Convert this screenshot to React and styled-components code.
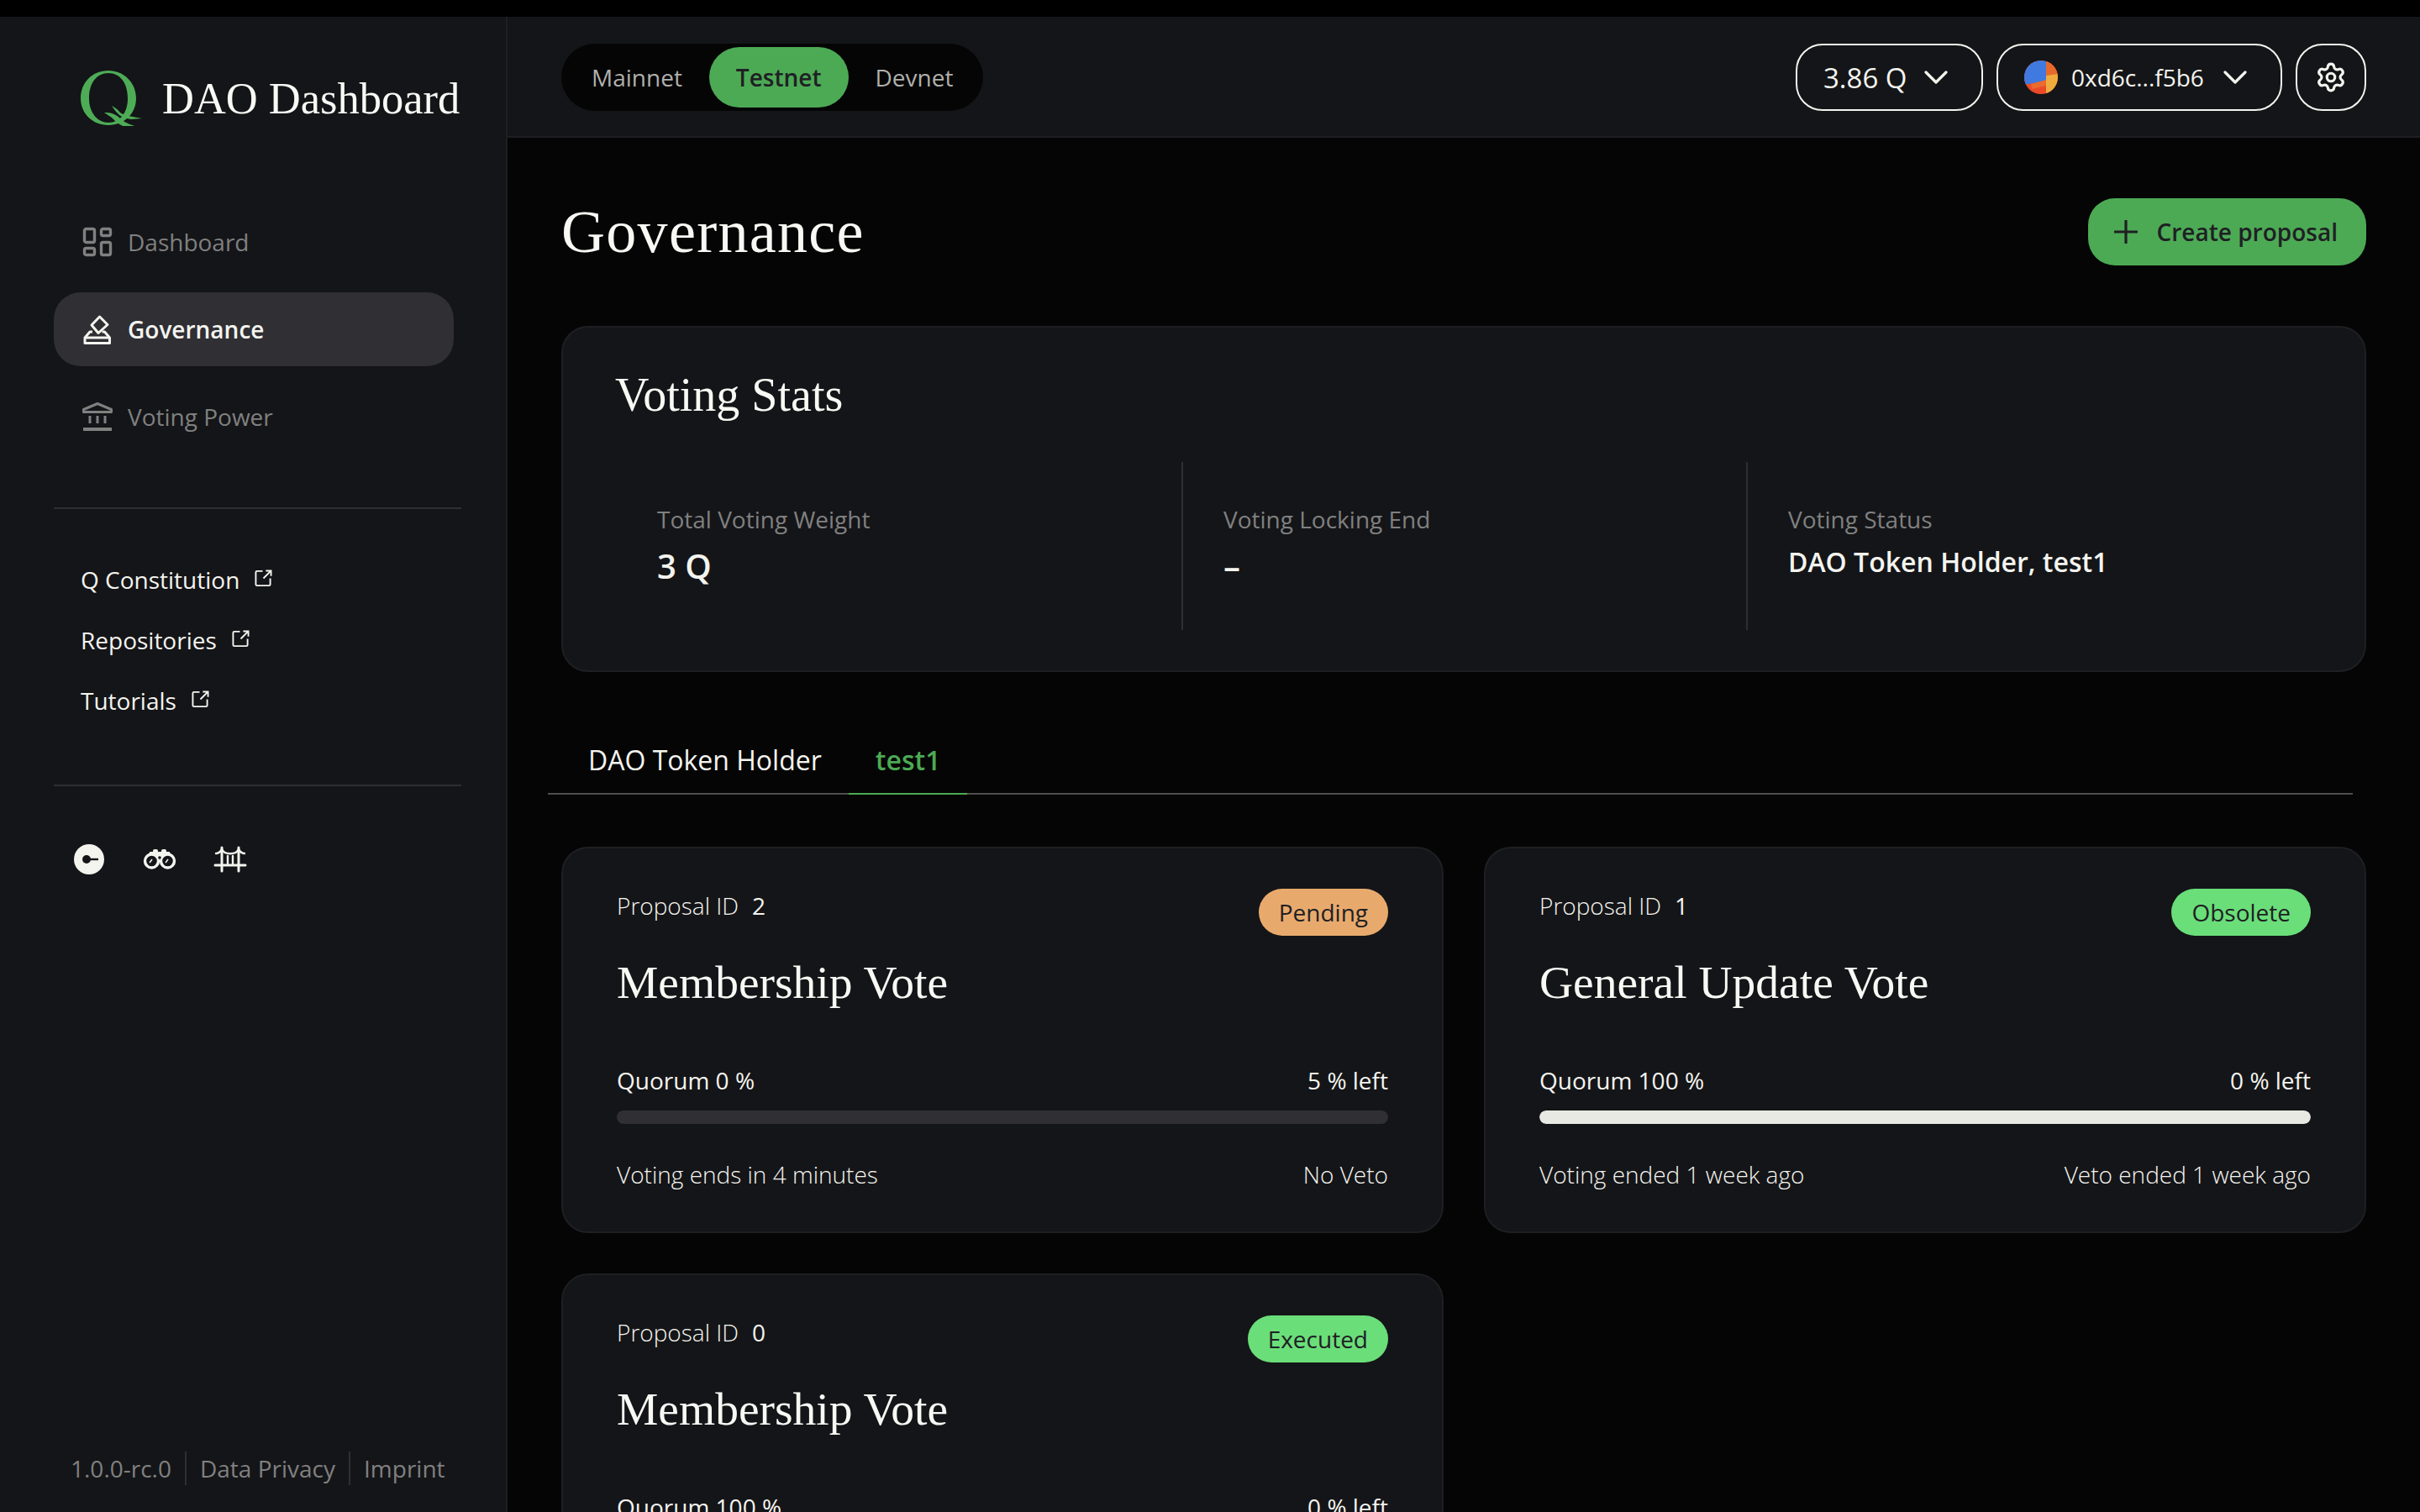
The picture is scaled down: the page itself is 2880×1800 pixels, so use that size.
import React from "react";
import styled, { createGlobalStyle } from "styled-components";
import { Settings } from "lucide-react";

const Global = createGlobalStyle`
  html, body { margin: 0; padding: 0; background: #000; }
  * { box-sizing: border-box; }
  body { font-family: "Open Sans", "Noto Sans", sans-serif; color: #f4f4ef; }
`;
const SERIF = `"Liberation Serif", "Times New Roman", serif`;

const Page = styled.div`
  display: flex; width: 2880px; height: 1800px; padding-top: 20px; overflow: hidden; background: #000;
`;
const Sidebar = styled.aside`
  flex: 0 0 604px; width: 604px; min-width: 0; display: flex; flex-direction: column; background: #141518;
  border-right: 2px solid #1e1f22; padding: 0 53px 32px 64px;
`;
const Brand = styled.div`
  display: flex; align-items: center; height: 66px; margin-top: 64px; padding-left: 32px; gap: 23px;
`;
const BrandName = styled.span`
  font: 400 52.5px/62px ${SERIF}; color: #f8f8f4; white-space: nowrap;
`;
const Nav = styled.nav`
  display: flex; flex-direction: column; gap: 16px; margin-top: 94px; width: 476px;
`;
const NavItem = styled.a`
  display: flex; align-items: center; gap: 16px; height: 88px; padding-left: 32px; border-radius: 32px;
  font-size: 28px; font-weight: ${p => (p.$active ? 600 : 400)};
  color: ${p => (p.$active ? "#f4f4ef" : "#808080")};
  background: ${p => (p.$active ? "#2f2f34" : "transparent")};
  svg { flex: 0 0 40px; width: 40px; height: 40px; }
`;
const Divider = styled.hr`
  border: 0; height: 2px; margin: ${p => p.$m}; background: #2f2f33; width: 100%;
`;
const Links = styled.div`display: flex; flex-direction: column; padding-left: 32px;`;
const LinkRow = styled.a`
  display: flex; align-items: center; gap: 18px; height: 72px; font-size: 28px; color: #f4f4ef; margin-top: -1px; margin-bottom: 1px;
  svg { width: 21px; height: 21px; margin-top: -3px; }
`;
const Tools = styled.div`
  display: flex; align-items: center; gap: 44px; height: 40px; padding-left: 22px;
  svg { width: 40px; height: 40px; }
`;
const Foot = styled.footer`
  display: flex; align-items: center; margin-top: auto; height: 40px; padding-left: 20px;
  font-size: 28px; color: #808080;
`;
const FootItem = styled.span`
  padding: 0 16px; height: 40px; line-height: 40px; white-space: nowrap;
  border-left: ${p => (p.$sep ? "2px solid #2f2f33" : "0")};
  &:first-child { padding-left: 0; }
`;
const Main = styled.main`flex: 1; min-width: 0; display: flex; flex-direction: column; background: #050505;`;
const Header = styled.header`
  display: flex; justify-content: space-between; align-items: center; height: 144px;
  padding: 32px 64px 30px; background: #141518; border-bottom: 2px solid #1e1f22;
`;
const Switch = styled.div`
  display: flex; height: 80px; padding: 4px; border-radius: 40px; background: #050505;
`;
const SwitchTab = styled.div`
  display: flex; align-items: center; height: 72px; padding: 0 32px; border-radius: 36px; font-size: 28px;
  font-weight: ${p => (p.$active ? 600 : 400)};
  color: ${p => (p.$active ? "#1f2024" : "#b0b0ac")};
  background: ${p => (p.$active ? "#4caa54" : "transparent")};
`;
const HeadActions = styled.div`display: flex; gap: 16px;`;
const OutlineButton = styled.button`
  display: flex; align-items: center; justify-content: ${p => (p.$center ? "center" : "flex-start")};
  height: 80px; width: ${p => p.$w}px; gap: ${p => p.$gap || 16}px; padding: 0 0 0 ${p => (p.$center ? 0 : 31)}px;
  border: 2px solid #f4f4ef; border-radius: 32px; background: #141518;
  color: #f4f4ef; font-family: inherit; font-size: ${p => p.$fs || 28}px; font-weight: 500;
`;
const Chevron = styled.svg`width: 28px; height: 16px; flex: none; margin-left: 7px;`;
const Content = styled.div`padding: 0 64px;`;
const TitleRow = styled.div`
  display: flex; justify-content: space-between; align-items: center; margin-top: 72px; height: 80px;
`;
const PageTitle = styled.h1`
  margin: 0; font: 400 72px/80px ${SERIF}; letter-spacing: 1.3px; color: #f8f8f4;
`;
const PrimaryButton = styled.button`
  display: flex; align-items: center; gap: 23px; height: 80px; padding: 0 34px 0 31px; border: 0; border-radius: 32px;
  background: #4caa54; color: #1f2024; font-family: inherit; font-size: 28px; font-weight: 600;
  svg { width: 28px; height: 28px; }
`;
const Panel = styled.section`
  background: #141518; border: 2px solid #1e1f22; border-radius: 32px;
`;
const StatsPanel = styled(Panel)`
  margin-top: 72px; height: 412px; padding: 44px 64px 48px;
`;
const StatsTitle = styled.h2`
  margin: 0 0 0 -2px; font: 400 56px/72px ${SERIF}; color: #f8f8f4;
`;
const StatsGrid = styled.div`
  display: grid; grid-template-columns: 674px 672px 1fr; height: 200px; margin-top: 44px;
`;
const Stat = styled.div`
  padding: 48px 48px 0; border-right: ${p => (p.$last ? "0" : "2px solid #2f2f33")};
`;
const StatLabel = styled.div`font-size: 28px; line-height: 40px; color: #808080;`;
const StatValue = styled.div`
  font-size: ${p => (p.$small ? 32 : 40)}px; line-height: ${p => (p.$small ? 62 : 72)}px; font-weight: 600; color: #f4f4ef;
`;
const TabBar = styled.div`
  display: flex; height: 82px; margin: 64px 16px 0 -16px; padding-left: 16px; border-bottom: 2px solid #4f4f4f;
`;
const Tab = styled.div`
  display: flex; align-items: center; height: 82px; padding: 0 32px; font-size: 32px;
  color: ${p => (p.$active ? "#4caa54" : "#f4f4ef")};
  font-weight: ${p => (p.$active ? 600 : 400)};
  border-bottom: 2px solid ${p => (p.$active ? "#4caa54" : "transparent")};
`;
const CardGrid = styled.div`
  display: grid; grid-template-columns: 1fr 1fr; gap: 48px; margin-top: 62px;
`;
const Card = styled(Panel)`padding: 48px 64px 47px;`;
const CardTop = styled.div`display: flex; justify-content: space-between; align-items: flex-start; height: 56px;`;
const ProposalId = styled.div`
  display: flex; gap: 16px; font-size: 28px; line-height: 40px; font-weight: 300; color: #f4f4ef;
  b { font-weight: 400; }
`;
const Badge = styled.span`
  display: flex; align-items: center; height: 56px; padding: 0 24px; border-radius: 28px; font-size: 28px; color: #1f2024;
  background: ${p => p.$color};
`;
const CardTitle = styled.h3`
  margin: 20px 0 0; font: 400 55.5px/72px ${SERIF}; color: #f8f8f4;
`;
const SplitRow = styled.div`
  display: flex; justify-content: space-between; height: 40px; line-height: 38px; font-size: 28px;
  font-weight: ${p => (p.$light ? 300 : 400)}; margin-top: ${p => p.$mt}px; color: #f4f4ef;
`;
const Track = styled.div`height: 16px; margin-top: 15px; border-radius: 8px; background: #2f2f34; overflow: hidden;`;
const Fill = styled.div`height: 100%; border-radius: 8px; background: #e9e9e3;`;

const DashboardIcon = () => (
  <svg viewBox="0 0 40 40" fill="none" stroke="currentColor" strokeWidth="3.4">
    <rect x="4.5" y="4.5" width="12" height="16" rx="2" />
    <rect x="24.5" y="4.5" width="11" height="8" rx="2" />
    <rect x="4.5" y="27.5" width="12" height="8" rx="2" />
    <rect x="24.5" y="20.5" width="11" height="15" rx="2" />
  </svg>
);
const GovernanceIcon = () => (
  <svg viewBox="0 0 40 40" fill="none" stroke="currentColor" strokeWidth="3" strokeLinejoin="round">
    <path d="M22.6 5L32 14.5L21 24.5L13 15z" />
    <path d="M14 23h-3l-6 7v6.5h29.500V30l-6-7h-3" />
    <path d="M5 30h29.500" />
  </svg>
);
const BankIcon = () => (
  <svg viewBox="0 0 40 40" fill="none" stroke="currentColor" strokeWidth="3" strokeLinejoin="round">
    <path d="M3.500 11.500L20 4.500l16.500 7v3h-33z" />
    <path d="M11 19v9M20 19v9M29 19v9" />
    <path strokeWidth="4" d="M3 35h34" />
  </svg>
);
const ExternalIcon = () => (
  <svg viewBox="0 0 22 22" fill="none" stroke="currentColor" strokeWidth="2">
    <path d="M10 2H3a1.500 1.500 0 0 0-1.500 1.500v15A1.500 1.500 0 0 0 3 20h15a1.500 1.500 0 0 0 1.500-1.500V11" />
    <path d="M11 11l9-9M14 1.500h6.500V8" />
  </svg>
);
const QLogo = () => (
  <svg width="74" height="66" viewBox="0 0 74 66" fill="#4eac56">
    <path fillRule="evenodd" d="M33 0C51 0 66 14 66 33C66 51 52 65 33 65C14 65 0 51 0 33C0 14 14 0 33 0ZM33 3C19 3 10 15 10 33C10 50 20 62 33 62C47 62 56 50 56 33C56 15 47 3 33 3Z" />
    <path d="M37 42C42 45 44 46 47 50C50 53 62 55 73 57L60 58C53 57 48 55 44 51C41 48 39 45 37 42Z" />
    <path d="M28 50C36 50 40 51 46 56C50 60 55 63 64 66L50 66C44 63 41 60 37 56C34 54 31 52 28 50Z" />
  </svg>
);
const KeyIcon = () => (
  <svg viewBox="0 0 40 40">
    <circle cx="20" cy="20" r="18" fill="#f4f4ef" />
    <circle cx="17" cy="20" r="5" fill="#141518" />
    <rect x="17" y="18.800" width="14" height="2.400" fill="#141518" />
  </svg>
);
const BinocularsIcon = () => (
  <svg viewBox="0 0 40 40" fill="none" stroke="#f4f4ef">
    <path d="M4 20l5-8h22l5 8" fill="#f4f4ef" strokeWidth="2" />
    <rect x="12" y="8" width="6" height="6" rx="2" fill="#f4f4ef" strokeWidth="0" />
    <rect x="22" y="8" width="6" height="6" rx="2" fill="#f4f4ef" strokeWidth="0" />
    <circle cx="10.500" cy="22" r="8" fill="#141518" strokeWidth="3.400" />
    <circle cx="29.500" cy="22" r="8" fill="#141518" strokeWidth="3.400" />
    <circle cx="20" cy="18" r="1.800" fill="#141518" strokeWidth="0" />
    <path d="M8 24l3-4M27 24l3-4" strokeWidth="1.600" />
  </svg>
);
const BridgeIcon = () => (
  <svg viewBox="0 0 40 40" fill="none" stroke="#f4f4ef" strokeWidth="3" strokeLinecap="round">
    <path d="M2 27h36" />
    <path d="M10 6v28M30 6v28" />
    <path d="M3 13c4 0 5-2 7-5c3 7 17 7 20 0c2 3 3 5 7 5" strokeWidth="2.400" />
    <path d="M17 16v10M23 16v10" strokeWidth="2.400" />
  </svg>
);
const Jazzicon = () => (
  <svg width="40" height="40" viewBox="0 0 40 40">
    <defs><clipPath id="jz"><circle cx="20" cy="20" r="20" /></clipPath></defs>
    <g clipPath="url(#jz)">
      <rect width="40" height="40" fill="#eb4a28" />
      <path d="M0 0h26v24L0 29z" fill="#4079e0" />
      <path d="M26 0h14v16l-14 2z" fill="#e76a2c" />
      <path d="M26 18l14-2v24H26z" fill="#efac3c" />
      <path d="M8 28l18-5v7L9 34z" fill="#e96b2e" />
    </g>
  </svg>
);
const ChevronDown = () => (
  <Chevron viewBox="0 0 28 16" fill="none" stroke="currentColor" strokeWidth="3.200" strokeLinecap="round" strokeLinejoin="round">
    <path d="M2 2l12 12L26 2" />
  </Chevron>
);
const PlusIcon = () => (
  <svg viewBox="0 0 28 28" fill="none" stroke="currentColor" strokeWidth="3.200" strokeLinecap="round">
    <path d="M14 1v26M1 14h26" />
  </svg>
);

const proposals = [
  { id: 2, status: "Pending", color: "#e8aa6c", title: "Membership Vote", quorum: 0, left: 5, a: "Voting ends in 4 minutes", b: "No Veto" },
  { id: 1, status: "Obsolete", color: "#6ade79", title: "General Update Vote", quorum: 100, left: 0, a: "Voting ended 1 week ago", b: "Veto ended 1 week ago" },
  { id: 0, status: "Executed", color: "#6ade79", title: "Membership Vote", quorum: 100, left: 0, a: "Voting ended 1 week ago", b: "Veto ended 1 week ago" },
];

export default function App() {
  return (
    <Page>
      <Global />
      <Sidebar>
        <Brand>
          <QLogo />
          <BrandName>DAO Dashboard</BrandName>
        </Brand>
        <Nav>
          <NavItem><DashboardIcon />Dashboard</NavItem>
          <NavItem $active><GovernanceIcon />Governance</NavItem>
          <NavItem><BankIcon />Voting Power</NavItem>
        </Nav>
        <Divider $m="64px 0 49px" />
        <Links>
          <LinkRow>Q Constitution <ExternalIcon /></LinkRow>
          <LinkRow>Repositories <ExternalIcon /></LinkRow>
          <LinkRow>Tutorials <ExternalIcon /></LinkRow>
        </Links>
        <Divider $m="63px 0 67px" />
        <Tools>
          <KeyIcon />
          <BinocularsIcon />
          <BridgeIcon />
        </Tools>
        <Foot>
          <FootItem>1.0.0-rc.0</FootItem>
          <FootItem $sep>Data Privacy</FootItem>
          <FootItem $sep>Imprint</FootItem>
        </Foot>
      </Sidebar>
      <Main>
        <Header>
          <Switch>
            <SwitchTab>Mainnet</SwitchTab>
            <SwitchTab $active>Testnet</SwitchTab>
            <SwitchTab>Devnet</SwitchTab>
          </Switch>
          <HeadActions>
            <OutlineButton $w={223} $fs={33} $gap={13}>3.86 Q <ChevronDown /></OutlineButton>
            <OutlineButton $w={340}><Jazzicon />0xd6c...f5b6 <ChevronDown /></OutlineButton>
            <OutlineButton $w={84} $center><Settings size={38} strokeWidth={2} /></OutlineButton>
          </HeadActions>
        </Header>
        <Content>
          <TitleRow>
            <PageTitle>Governance</PageTitle>
            <PrimaryButton><PlusIcon />Create proposal</PrimaryButton>
          </TitleRow>
          <StatsPanel>
            <StatsTitle>Voting Stats</StatsTitle>
            <StatsGrid>
              <Stat><StatLabel>Total Voting Weight</StatLabel><StatValue>3 Q</StatValue></Stat>
              <Stat><StatLabel>Voting Locking End</StatLabel><StatValue>–</StatValue></Stat>
              <Stat $last><StatLabel>Voting Status</StatLabel><StatValue $small>DAO Token Holder, test1</StatValue></Stat>
            </StatsGrid>
          </StatsPanel>
          <TabBar>
            <Tab>DAO Token Holder</Tab>
            <Tab $active>test1</Tab>
          </TabBar>
          <CardGrid>
            {proposals.map(p => (
              <Card key={p.id}>
                <CardTop>
                  <ProposalId>Proposal ID <b>{p.id}</b></ProposalId>
                  <Badge $color={p.color}>{p.status}</Badge>
                </CardTop>
                <CardTitle>{p.title}</CardTitle>
                <SplitRow $mt={61}><span>Quorum {p.quorum} %</span><span>{p.left} % left</span></SplitRow>
                <Track><Fill style={{ width: `${p.quorum}%` }} /></Track>
                <SplitRow $light $mt={41}><span>{p.a}</span><span>{p.b}</span></SplitRow>
              </Card>
            ))}
          </CardGrid>
        </Content>
      </Main>
    </Page>
  );
}
